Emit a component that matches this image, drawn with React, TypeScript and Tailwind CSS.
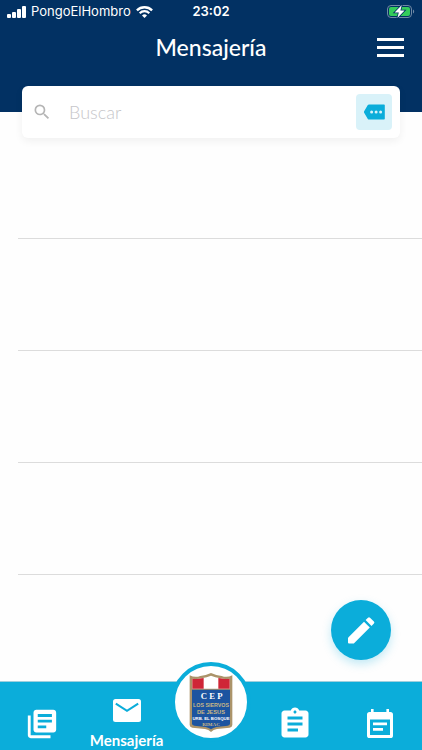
import type { ReactNode } from "react";
import { MdAssignment, MdLibraryBooks, MdSearch } from "react-icons/md";

function SignalIcon() {
  return (
    <svg className="shrink-0" width="19" height="12" viewBox="0 0 19 12" fill="currentColor" aria-hidden="true">
      <rect x="0" y="8" width="4" height="4" rx="1" />
      <rect x="5" y="6" width="4" height="6" rx="1" />
      <rect x="10" y="3" width="4" height="9" rx="1" />
      <rect x="15" y="0" width="4" height="12" rx="1" />
    </svg>
  );
}

function WifiIcon() {
  return (
    <svg className="shrink-0" width="17" height="12" viewBox="0 0 17 12" fill="none" stroke="currentColor" aria-hidden="true">
      <path d="M.9 4.4a10.8 10.8 0 0 1 15.2 0" strokeWidth="2.3" />
      <path d="M3.7 7.2a6.8 6.8 0 0 1 9.6 0" strokeWidth="2.2" />
      <path d="M8.5 12 6 9.5a3.6 3.6 0 0 1 5 0z" fill="currentColor" stroke="none" />
    </svg>
  );
}

function BatteryIcon() {
  return (
    <svg width="28" height="14" viewBox="0 0 28 14" aria-hidden="true">
      <rect x="0.5" y="0.5" width="24" height="12" rx="3.5" fill="none" stroke="#7189a5" />
      <path d="M26 4.5c1.6.6 1.6 3.4 0 4z" fill="#7189a5" />
      <rect x="2" y="2" width="21" height="9" rx="2" fill="#33cb5b" />
      <path
        d="M14.8 0 7.6 7.5h4.2L10.4 13 17.6 5.6h-4.2z"
        fill="#fff"
        stroke="#023163"
        strokeWidth="1.6"
        paintOrder="stroke"
      />
    </svg>
  );
}

function TagIcon() {
  return (
    <svg width="21" height="16" viewBox="0 0 21 16" aria-hidden="true">
      <path d="M5 0.5h15a.8.8 0 0 1 .8.8v13.4a.8.8 0 0 1-.8.8H5a1.5 1.5 0 0 1-1.2-.6L.3 9a1.6 1.6 0 0 1 0-2L3.8 1.1A1.5 1.5 0 0 1 5 .5z" fill="#0badda" />
      <g fill="#d9f2f9">
        <circle cx="7.6" cy="8" r="1.5" />
        <circle cx="12.1" cy="8" r="1.5" />
        <circle cx="16.6" cy="8" r="1.5" />
      </g>
    </svg>
  );
}

function PencilIcon() {
  return (
    <svg width="42" height="42" viewBox="0 0 42 42" fill="currentColor" aria-hidden="true">
      <path d="M8 28.7 24 12.7 29.8 18.5 13.8 34.5H9Q8 34.5 8 33.5Z" />
      <path d="M25.6 11.1 28 8.7Q29 7.7 30 8.7L33.9 12.6Q34.9 13.6 33.9 14.6L31.5 17Z" />
    </svg>
  );
}

function MailIcon() {
  return (
    <svg width="28" height="23" viewBox="0 0 28 23" aria-hidden="true">
      <rect width="28" height="23" rx="2.5" fill="currentColor" />
      <path d="M2.8 4.6 14 11.8 25.2 4.6" fill="none" stroke="#0badda" strokeWidth="2.1" />
    </svg>
  );
}

function CalendarIcon() {
  return (
    <svg width="26" height="29" viewBox="0 0 26 29" aria-hidden="true">
      <path
        d="M4 0h2.6v3h12.8V0H22v3h1.4A2.6 2.6 0 0 1 26 5.6v20.8a2.6 2.6 0 0 1-2.6 2.6H2.6A2.6 2.6 0 0 1 0 26.4V5.6A2.6 2.6 0 0 1 2.6 3H4z"
        fill="currentColor"
      />
      <path d="M3 10.5h20V26H3z" fill="#0badda" />
      <path d="M6 13.5h14v2.7H6zM6 19h10v2.7H6z" fill="currentColor" />
    </svg>
  );
}

function SchoolCrest() {
  return (
    <svg width="44" height="59" viewBox="0 0 132 177" role="img" aria-label="CEP Los Siervos de Jesús">
      <path
        d="M2 7Q18 15 34 9Q50 7 66 0Q82 7 98 9Q114 15 130 7V156Q130 163 122 164L84 168Q73 170 66 177Q59 170 48 168L10 164Q2 163 2 156Z"
        fill="#ab946a"
      />
      <path d="M10 17Q24 20 38 16Q54 13 66 8Q78 13 94 16Q108 20 122 17V47H10Z" fill="#fff" />
      <path d="M10 17Q24 20 38 16L44 15V47H10Z" fill="#cf2637" />
      <path d="M122 17Q108 20 94 16L88 15V47H122Z" fill="#cf2637" />
      <path d="M9 50H123V152Q123 157 116 158L82 162Q72 164 66 169Q60 164 50 162L16 158Q9 157 9 152Z" fill="#1c54a0" />
      <g textAnchor="middle" fontWeight="700">
        <text x="68" y="78" fontSize="26" fill="#fff" fontFamily="Liberation Serif, serif">
          C E P
        </text>
        <g fill="#cbb885" fontFamily="Liberation Sans, sans-serif">
          <text x="66" y="101" fontSize="16">LOS SIERVOS</text>
          <text x="66" y="123" fontSize="17">DE JESUS</text>
        </g>
        <text x="66" y="142" fontSize="13" fill="#fff" fontFamily="Liberation Sans, sans-serif">
          URB. EL BOSQUE
        </text>
        <text x="66" y="159" fontSize="15" fill="#cbb885" fontFamily="Liberation Serif, serif">
          RIMAC
        </text>
      </g>
    </svg>
  );
}

function NavLink({ label, children }: { label: string; children: ReactNode }) {
  return (
    <a href="#" aria-label={label} className="flex items-center justify-center pt-[15px]">
      {children}
    </a>
  );
}

export default function App() {
  return (
    <div className="relative flex min-h-screen flex-col bg-[#fefefe] font-['Lato',sans-serif]">
      <header className="h-28 bg-[#023163] text-white">
        <div className="grid h-6 grid-cols-[1fr_auto_1fr] items-center px-[7px] font-['Inter',sans-serif] text-[13px]">
          <div className="flex items-center gap-[5px]">
            <SignalIcon />
            <span>PongoElHombro</span>
            <WifiIcon />
          </div>
          <span className="font-semibold">23:02</span>
          <div className="flex justify-end">
            <BatteryIcon />
          </div>
        </div>
        <div className="grid h-[46px] grid-cols-[1fr_auto_1fr] items-center px-4">
          <h1 className="col-start-2 text-[23px] leading-7 font-medium">Mensajería</h1>
          <button type="button" aria-label="Menú" className="flex flex-col gap-[5px] justify-self-end p-0.5">
            <span className="h-[3px] w-[27px] bg-white" />
            <span className="h-[3px] w-[27px] bg-white" />
            <span className="h-[3px] w-[27px] bg-white" />
          </button>
        </div>
      </header>

      <div className="z-10 mx-[22px] -mt-[26px] flex h-[52px] items-center rounded-md bg-white pr-2 pl-2.5 shadow-[0_3px_8px_rgba(0,0,0,0.06)]">
        <label htmlFor="search" aria-label="Buscar">
          <MdSearch size={20} className="text-[#b5b5b5]" />
        </label>
        <input
          id="search"
          type="text"
          placeholder="Buscar"
          className="ml-[17px] min-w-0 flex-1 text-lg font-light outline-none placeholder:text-[#c6c6ca]"
        />
        <button
          type="button"
          aria-label="Etiquetas"
          className="flex size-9 items-center justify-center rounded bg-[#d9f2f9]"
        >
          <TagIcon />
        </button>
      </div>

      <main className="-mt-[11px] flex-1 pl-[18px]">
        <ul>
          <li className="h-28 border-b border-[#dcdcdc]" />
          <li className="h-28 border-b border-[#dcdcdc]" />
          <li className="h-28 border-b border-[#dcdcdc]" />
          <li className="h-28 border-b border-[#dcdcdc]" />
        </ul>
      </main>

      <button
        type="button"
        aria-label="Nuevo mensaje"
        className="absolute right-[31px] bottom-[90px] flex size-[60px] items-center justify-center rounded-full bg-[#0badda] text-white shadow-[0_4px_10px_rgba(11,173,218,0.25)]"
      >
        <PencilIcon />
      </button>

      <nav className="grid h-[69px] grid-cols-5 border-t border-[#9fcfdd] bg-[#0badda] text-white">
        <NavLink label="Publicaciones">
          <MdLibraryBooks size={34} />
        </NavLink>
        <a href="#" aria-current="page" className="flex flex-col items-center gap-2 pt-[17px]">
          <MailIcon />
          <span className="text-[15px] leading-5 font-bold">Mensajería</span>
        </a>
        <a
          href="#"
          className="-mt-5 flex size-20 items-center justify-center justify-self-center rounded-full border-4 border-[#0badda] bg-white"
        >
          <SchoolCrest />
        </a>
        <NavLink label="Tareas">
          <MdAssignment size={36} />
        </NavLink>
        <NavLink label="Calendario">
          <CalendarIcon />
        </NavLink>
      </nav>
    </div>
  );
}
